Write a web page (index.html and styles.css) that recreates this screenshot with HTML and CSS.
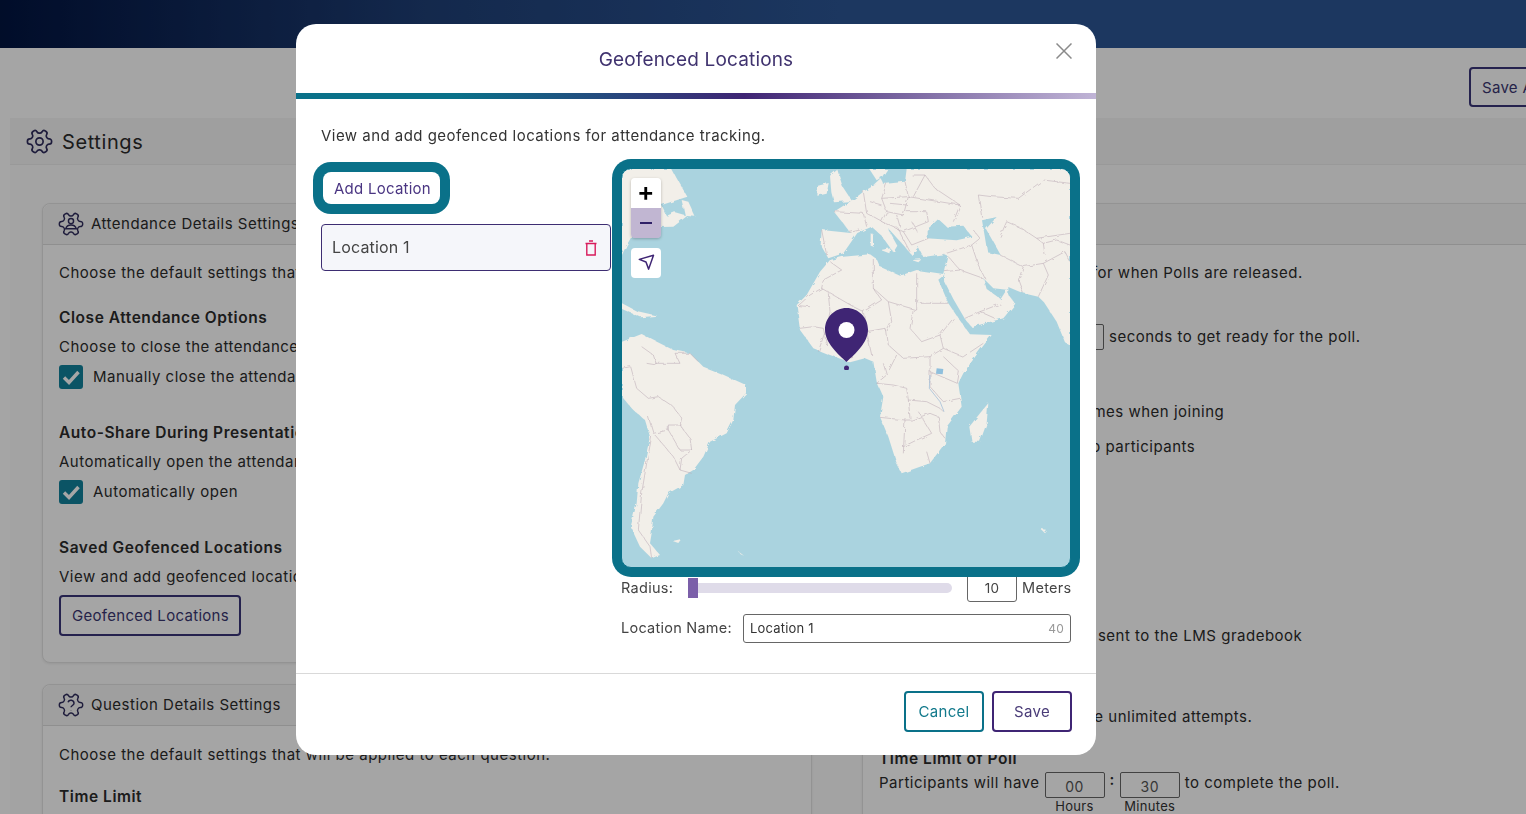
FILE: index.html
```html
<!DOCTYPE html>
<html lang="en">
<head>
    <meta charset="UTF-8">
    <meta name="viewport" content="width=device-width, initial-scale=1.0">
    <title>Geofenced Locations</title>
    <link rel="stylesheet" href="styles.css">
</head>
<body>

    <svg class="icon-defs" aria-hidden="true">
        <symbol id="cog" viewBox="0 0 24 24">
            <path transform="rotate(90 12 12)" d="M12.22 2h-.44a2 2 0 0 0-2 2v.18a2 2 0 0 1-1 1.73l-.43.25a2 2 0 0 1-2 0l-.15-.08a2 2 0 0 0-2.73.73l-.22.38a2 2 0 0 0 .73 2.73l.15.1a2 2 0 0 1 1 1.72v.51a2 2 0 0 1-1 1.74l-.15.09a2 2 0 0 0-.73 2.73l.22.38a2 2 0 0 0 2.73.73l.15-.08a2 2 0 0 1 2 0l.43.25a2 2 0 0 1 1 1.73V20a2 2 0 0 0 2 2h.44a2 2 0 0 0 2-2v-.18a2 2 0 0 1 1-1.73l.43-.25a2 2 0 0 1 2 0l.15.08a2 2 0 0 0 2.73-.73l.22-.39a2 2 0 0 0-.73-2.73l-.15-.08a2 2 0 0 1-1-1.74v-.5a2 2 0 0 1 1-1.74l.15-.09a2 2 0 0 0 .73-2.73l-.22-.38a2 2 0 0 0-2.73-.73l-.15.08a2 2 0 0 1-2 0l-.43-.25a2 2 0 0 1-1-1.73V4a2 2 0 0 0-2-2z"/>
        </symbol>
    </svg>

    <div class="page">
        <div class="topbar"></div>

        <div class="toolbar">
            <button class="btn-outline">Save All Settings</button>
        </div>

        <div class="settings">
            <div class="settings-head">
                <svg class="icon-settings" viewBox="0 0 24 24"><use href="#cog"/><circle cx="12" cy="12" r="3"/></svg>
                <h1>Settings</h1>
            </div>

            <div class="settings-body">
                <!-- left column -->
                <div class="col">
                    <div class="card">
                        <div class="card-head">
                            <svg class="icon-card" viewBox="0 0 24 24"><use href="#cog"/><circle cx="12" cy="9.5" r="2.2"/><path d="M7.5 16c.6-2.2 2.3-3.2 4.5-3.2s3.9 1 4.5 3.2z"/></svg>
                            <span>Attendance Details Settings</span>
                        </div>
                        <div class="card-body">
                            <p class="intro">Choose the default settings that will be applied to each attendance.</p>

                            <div class="option">
                                <h3>Close Attendance Options</h3>
                                <p>Choose to close the attendance manually or automatically.</p>
                                <label class="check"><span class="box"><svg viewBox="0 0 24 24"><path d="M5 12.5l5 5L19.5 7"/></svg></span>Manually close the attendance</label>
                            </div>

                            <div class="option">
                                <h3>Auto-Share During Presentation</h3>
                                <p>Automatically open the attendance during a presentation.</p>
                                <label class="check"><span class="box"><svg viewBox="0 0 24 24"><path d="M5 12.5l5 5L19.5 7"/></svg></span>Automatically open</label>
                            </div>

                            <div class="option option-last">
                                <h3>Saved Geofenced Locations</h3>
                                <p>View and add geofenced locations for attendance tracking.</p>
                                <button class="btn-outline">Geofenced Locations</button>
                            </div>
                        </div>
                    </div>

                    <div class="card">
                        <div class="card-head">
                            <svg class="icon-card" viewBox="0 0 24 24"><use href="#cog"/><path d="M9.4 9.6a2.7 2.7 0 0 1 5.2.9c0 1.800-2.600 2-2.600 3.500M12 16.600v.2"/></svg>
                            <span>Question Details Settings</span>
                        </div>
                        <div class="card-body">
                            <p class="intro">Choose the default settings that will be applied to each question.</p>
                            <div class="option option-time">
                                <h3>Time Limit</h3>
                            </div>
                        </div>
                    </div>
                </div>

                <!-- right column, mostly behind the modal -->
                <div class="col">
                    <div class="card card-right">
                        <div class="card-head"><span>Poll Details Settings</span></div>
                        <div class="card-body">
                            <p class="intro">Choose the default settings for when Polls are released.</p>

                            <div class="line line-countdown">
                                <span>Give participants</span>
                                <span class="num num-small"></span>
                                <span>seconds to get ready for the poll.</span>
                            </div>

                            <p class="line line-names">Ask participants for their names when joining</p>
                            <p class="line line-show">Share the correct answers to participants</p>
                            <p class="line line-lms">Allow the poll's results to be sent to the LMS gradebook</p>
                            <p class="line line-attempts">Let all of the participants have unlimited attempts.</p>

                            <h3 class="poll-limit">Time Limit of Poll</h3>
                            <div class="line-time">
                                <span>Participants will have</span>
                                <div class="time-field"><span class="num">00</span><small>Hours</small></div>
                                <span class="time-colon">:</span>
                                <div class="time-field"><span class="num">30</span><small>Minutes</small></div>
                                <span>to complete the poll.</span>
                            </div>
                        </div>
                    </div>
                </div>
            </div>
        </div>
    </div>

    <div class="overlay">
        <div class="modal">
            <div class="modal-head">
                <h2>Geofenced Locations</h2>
                <button class="modal-close" aria-label="Close">
                    <svg viewBox="0 0 16 16"><path d="M.5.5l15 15M15.500.5l-15 15"/></svg>
                </button>
            </div>
            <div class="modal-bar"></div>

            <div class="modal-body">
                <p class="modal-desc">View and add geofenced locations for attendance tracking.</p>

                <div class="geo">
                    <div class="geo-list">
                        <button class="btn-add">Add Location</button>
                        <div class="geo-item">
                            <span>Location 1</span>
                            <svg class="icon-trash" viewBox="0 0 12 16"><path d="M4 1h4M.5 3.500h11M1.800 3.500h8.400V15H1.800z"/></svg>
                        </div>
                    </div>

                    <div class="geo-main">
                        <div class="map">
                            <svg class="map-tiles" viewBox="36 42 1344 1194" preserveAspectRatio="none">
                                <defs>
                                    <filter id="rough" filterUnits="userSpaceOnUse" x="0" y="0" width="1400" height="1250">
                                        <feTurbulence type="fractalNoise" baseFrequency="0.05" numOctaves="3" seed="4"/>
                                        <feDisplacementMap in="SourceGraphic" scale="11"/>
                                    </filter>
                                </defs>
                                <g class="rough">
                                    <g class="land">
                                        <!-- north america -->
                                        <path d="M36,42 L185,42 L200,70 L232,125 L185,140 L155,150 L170,182 L195,172 L232,182 L190,215 L150,216 L120,236 L70,236 L50,270 L36,300 Z"/>
                                        <path d="M215,135 L235,140 L256,185 L225,182 Z"/>
                                        <path d="M36,445 L80,468 L142,482 L92,487 L36,462 Z"/>
                                        <!-- uk, ireland, scandinavia -->
                                        <path d="M660,62 L682,44 L698,95 L726,138 L672,142 L664,112 Z"/>
                                        <path d="M624,92 L656,84 L650,116 L622,122 Z"/>
                                        <path d="M778,42 L800,76 L816,66 L832,42 Z"/>
                                        <path d="M790,90 L812,70 L820,86 Z"/>
                                        <!-- europe and asia -->
                                        <path d="M890,42 L1380,42 L1380,570 L1365,562 L1340,500 L1302,442 L1285,425 L1240,415 L1195,396 L1195,420 L1216,446 L1180,490 L1085,516 L1065,492 L1030,432 L1000,372 L1005,350 L1015,305 L1000,298 L940,306 L925,276 L905,300 L882,272 L830,215 L862,272 L850,292 L815,242 L785,215 L742,234 L700,295 L655,310 L632,270 L635,225 L722,234 L672,170 L735,130 L760,110 L800,86 L830,86 L885,80 Z"/>
                                        <path d="M782,235 L792,240 L792,275 L782,272 Z"/>
                                        <path d="M812,285 L842,280 L838,295 Z"/>
                                        <path d="M905,315 L935,313 L925,322 Z"/>
                                        <!-- africa -->
                                        <path d="M660,315 L700,305 L780,298 L800,312 L810,335 L870,362 L920,345 L1005,358 L985,374 L1015,445 L1045,490 L1080,538 L1145,540 L1110,585 L1060,655 L1045,685 L1055,755 L1010,815 L1005,865 L960,925 L875,955 L860,925 L835,845 L810,785 L820,725 L800,680 L790,620 L765,610 L720,622 L660,600 L610,580 L570,525 L560,450 L590,420 L630,350 Z"/>
                                        <path d="M1135,745 L1130,805 L1110,860 L1085,860 L1078,815 L1110,775 Z"/>
                                        <!-- south america -->
                                        <path d="M36,560 L95,537 L130,555 L190,585 L240,595 L280,635 L330,655 L408,690 L408,715 L375,750 L370,795 L350,835 L300,860 L280,905 L250,945 L225,960 L220,990 L175,1015 L160,1045 L130,1085 L125,1135 L120,1165 L150,1200 L125,1210 L90,1175 L62,1115 L80,1045 L85,985 L105,915 L120,845 L105,795 L70,765 L36,725 Z"/>
                                        <path d="M188,1158 L214,1152 L205,1164 Z"/>
                                        <path d="M386,1190 L402,1202 L392,1198 Z"/>
                                        <path d="M1292,1122 L1308,1124 L1302,1132 Z"/>
                                    </g>
                                    <g class="water">
                                        <path d="M950,225 L985,192 L1010,215 L1060,212 L1086,245 L1040,256 L950,250 Z"/>
                                        <path d="M1116,196 L1160,186 L1128,222 L1172,300 L1132,292 L1124,242 Z"/>
                                        <path d="M1120,370 L1150,400 L1190,404 L1172,432 L1130,402 Z"/>
                                    </g>
                                    <g class="borders">
                                        <!-- africa -->
                                        <path d="M635,400 L730,455 L760,470 L815,435 L790,400 L790,312"/>
                                        <path d="M660,320 L695,345 L640,375 L635,400 L600,420 L565,452 L600,455"/>
                                        <path d="M655,415 L660,470 L650,520 L640,545 L625,590"/>
                                        <path d="M570,520 L610,515 L640,520 L650,570"/>
                                        <path d="M790,400 L835,440 L920,465 L920,355"/>
                                        <path d="M920,445 L1015,445"/>
                                        <path d="M835,440 L845,500 L830,530 L835,570 L880,610 L960,605 L1000,580"/>
                                        <path d="M760,470 L770,530 L825,520 L830,530"/>
                                        <path d="M910,465 L900,520 L935,560 L990,540 L1030,490"/>
                                        <path d="M990,540 L1000,580 L1060,605 L1120,565"/>
                                        <path d="M770,530 L785,600 M720,540 L725,610"/>
                                        <path d="M960,605 L960,695 L1000,740 L1050,730"/>
                                        <path d="M1000,605 L1048,650 L1042,685 L960,650"/>
                                        <path d="M800,685 L850,690 L890,700 L895,735 L950,740 L990,760 L1000,770"/>
                                        <path d="M810,787 L885,795 L880,895 M885,795 L905,795 L960,775 L985,785 L990,830 L1005,850"/>
                                        <path d="M895,735 L900,790 M925,770 L965,835 L920,855 L880,875 M960,925 L950,890"/>
                                        <path d="M820,625 L830,660 L860,600 M830,660 L800,685"/>
                                        <!-- europe -->
                                        <path d="M672,170 L760,175 L770,215 M760,110 L770,175 L815,200"/>
                                        <path d="M635,225 L650,300 M720,232 L750,225"/>
                                        <path d="M830,86 L815,130 L830,170 L880,180 L895,125 L885,80"/>
                                        <path d="M815,130 L895,125 L1050,150 L1030,200"/>
                                        <path d="M830,170 L815,200 L880,230 L955,200 L950,170 L890,170"/>
                                        <path d="M880,230 L905,270 L955,250 M860,215 L900,290"/>
                                        <path d="M905,60 L945,60 L975,100 L1050,150 M945,60 L910,125"/>
                                        <path d="M780,140 L815,150 M840,145 L890,150 M860,180 L870,215 M905,200 L925,235"/>
                                        <!-- asia -->
                                        <path d="M1000,298 L1085,270 L1110,250 L1090,225 M1085,270 L1105,330 L1125,370"/>
                                        <path d="M1015,305 L1050,345 L1120,370 M1050,345 L1005,350"/>
                                        <path d="M1105,120 L1145,125 L1225,130 L1300,75 L1380,85 M1105,120 L1115,185"/>
                                        <path d="M1170,300 L1240,335 L1225,375 L1240,415 M1170,245 L1190,200 L1235,220 L1280,250 L1380,235"/>
                                        <path d="M1240,335 L1300,325 L1365,290 L1380,320 M1300,325 L1315,360 L1285,425"/>
                                        <path d="M1065,490 L1110,470 L1175,445 M1110,470 L1155,490"/>
                                        <path d="M1280,250 L1300,265 L1340,255 L1380,270 M1300,265 L1305,300"/>
                                        <!-- south america -->
                                        <path d="M36,640 L62,635 L80,700 L115,730 L145,725 L190,755 L215,790 L210,810 L240,850 L245,885 L215,910 L210,945 L245,955"/>
                                        <path d="M110,625 L140,630 L130,600 L95,575 M135,625 L210,625 L195,595 L240,595 L265,620"/>
                                        <path d="M115,785 L130,835 L175,825 L175,810 L215,810"/>
                                        <path d="M125,845 L110,925 L95,1015 L85,1125 L120,1175 L125,1210"/>
                                        <path d="M175,825 L210,885 L245,885 M135,840 L190,905 L210,945"/>
                                    </g>
                                </g>
                                <path class="river" d="M960,660 L958,700 L990,740 L1002,770"/>
                                <path class="lake" d="M980,640 L1000,642 L998,658 L978,656 Z"/>
                            </svg>

                            <div class="map-controls">
                                <div class="zoom-group">
                                    <button class="map-btn">+</button>
                                    <button class="map-btn map-btn-active"><span class="minus"></span></button>
                                </div>
                                <button class="map-btn">
                                    <svg class="icon-nav" viewBox="0 0 24 24"><polygon points="3,8.500 22,3 15.500,21.500 12,12"/></svg>
                                </button>
                            </div>

                            <svg class="pin" viewBox="0 0 43 62">
                                <path d="M21.500 0C9.600 0 0 9.600 0 21.500 0 35 13 46 21.500 54 30 46 43 35 43 21.500 43 9.600 33.400 0 21.500 0z"/>
                                <circle class="pin-hole" cx="21.500" cy="22" r="8"/>
                                <circle cx="21.500" cy="60" r="2.500"/>
                            </svg>
                        </div>

                        <div class="radius-row">
                            <span class="radius-label">Radius:</span>
                            <div class="slider"><span class="slider-thumb"></span></div>
                            <span class="radius-value">10</span>
                            <span class="radius-unit">Meters</span>
                        </div>

                        <div class="name-row">
                            <span class="name-label">Location Name:</span>
                            <div class="name-field">
                                <span>Location 1</span>
                                <span class="name-count">40</span>
                            </div>
                        </div>
                    </div>
                </div>
            </div>

            <div class="modal-foot">
                <button class="btn-cancel">Cancel</button>
                <button class="btn-save">Save</button>
            </div>
        </div>
    </div>

</body>
</html>
```

FILE: styles.css
```css
* {
    box-sizing: border-box;
}

html, body {
    height: 100%;
    overflow: hidden;
}

body {
    font-family: 'Inter', 'Liberation Sans', sans-serif;
    font-size: 15px;
    letter-spacing: 0.5px;
    margin: 0;
    color: #2b2b2b;
    background-color: #fdfdfd;
}

h1, h2, h3, p {
    margin: 0;
    font-weight: normal;
}

button {
    font-family: inherit;
    letter-spacing: inherit;
    cursor: pointer;
}

.icon-defs {
    width: 0;
    height: 0;
    position: absolute;
}

/* page behind the modal */

.page {
    width: 1526px;
    height: 814px;
    overflow: hidden;
}

.topbar {
    height: 48px;
    background: linear-gradient(90deg, #021440 0%, #1f3f76 28%, #2b5594 55%, #2b5594 100%);
}

.toolbar {
    height: 70px;
    padding: 19px 0 0 1469px;
}

.toolbar .btn-outline {
    white-space: nowrap;
    height: 40px;
    width: 160px;
    padding: 0 0 0 11px;
    text-align: left;
}

.btn-outline {
    height: 41px;
    padding: 0 10px 0 11px;
    font-size: 15px;
    letter-spacing: 0.3px;
    color: #3a3671;
    background-color: transparent;
    border: 2px solid #3a3578;
    border-radius: 4px;
}

.settings {
    margin-left: 10px;
    width: 1600px;
}

.settings-head {
    height: 47px;
    display: flex;
    align-items: center;
    gap: 8px;
    padding: 1px 0 0 15px;
    background-color: #f4f4f4;
    border-bottom: 1px solid #ececec;
}

.settings-head h1 {
    font-size: 20px;
    letter-spacing: 0.6px;
}

.icon-settings {
    width: 29px;
    height: 29px;
    fill: none;
    stroke: #2f2c5c;
    stroke-width: 1.4;
}

.settings-body {
    display: flex;
    gap: 50px;
    padding: 38px 0 0 32px;
    background-color: #fbfbfb;
}

.col {
    width: 770px;
    flex: none;
}

.card {
    border: 1px solid #e2e2e2;
    border-radius: 8px;
    background-color: #fefefe;
    margin-bottom: 21px;
    box-shadow: 0 1px 3px rgba(0, 0, 0, 0.08);
}

.card-head {
    height: 41px;
    display: flex;
    align-items: center;
    gap: 6px;
    padding: 0 0 1px 14px;
    background-color: #f5f5f5;
    border-bottom: 1px solid #dcdcdc;
    border-radius: 8px 8px 0 0;
    white-space: nowrap;
}

.icon-card {
    width: 28px;
    height: 28px;
    fill: none;
    stroke: #2f2c5c;
    stroke-width: 1.25;
}

.card-body {
    padding: 18px 16px 26px;
}

.card + .card .card-body {
    padding-top: 19px;
}

.card-body p, .card-body h3, .check {
    white-space: nowrap;
    line-height: 20px;
}

.option {
    margin-top: 25px;
    height: 82px;
    margin-bottom: 33px;
}

.option h3 {
    font-size: 15.5px;
    font-weight: 600;
    letter-spacing: 0.55px;
    margin-bottom: 9px;
}

.option p {
    margin-bottom: 8px;
}

.option + .option {
    margin-top: 0;
}

.option-last {
    height: 98px;
    margin-bottom: 0;
}

.option-time {
    margin-top: 22px;
}

.check {
    display: flex;
    align-items: center;
    gap: 10px;
    height: 24px;
}

.box {
    width: 24px;
    height: 24px;
    border-radius: 3px;
    background-color: #11829c;
}

.box svg {
    display: block;
    fill: none;
    stroke: #fff;
    stroke-width: 3.4;
}

/* right column rows: the start of each line sits behind the modal */

.line {
    white-space: nowrap;
    line-height: 20px;
}

.line-countdown {
    margin-top: 41px;
    display: flex;
    align-items: center;
    gap: 5px;
}

.line-countdown span:first-child {
    width: 140px;
}

.num {
    display: block;
    height: 26px;
    line-height: 27px;
    text-align: center;
    width: 60px;
    border: 1px solid #666;
    border-radius: 2px;
    color: #555;
    font-size: 14px;
}

.num-small {
    width: 80px;
}

.card-body .line-names {
    margin-top: 52px;
    padding-left: 3px;
}

.card-body .line-show {
    margin-top: 15px;
    padding-left: 3px;
}

.line-lms {
    margin-top: 169px;
}

.card-body .line-attempts {
    margin-top: 61px;
    margin-left: -5px;
}

.poll-limit {
    font-size: 15.5px;
    font-weight: 600;
    letter-spacing: 0.55px;
    margin-top: 22px;
}

.line-time {
    display: flex;
    gap: 5px;
    white-space: nowrap;
    line-height: 20px;
    margin-top: 4px;
}

.time-field {
    display: flex;
    flex-direction: column;
    align-items: center;
    margin-top: -1px;
}

.time-field small {
    font-size: 13px;
    letter-spacing: 0.3px;
    line-height: 16px;
    color: #333;
}

.time-colon {
    line-height: 14px;
    font-weight: 600;
}

/* modal */

.overlay {
    position: fixed;
    top: 0;
    left: 0;
    right: 0;
    bottom: 0;
    padding: 24px 0 0 296px;
    background-color: rgba(0, 0, 0, 0.35);
}

.modal {
    width: 800px;
    height: 731px;
    background-color: #fff;
    border-radius: 20px;
    overflow: hidden;
    display: flex;
    flex-direction: column;
}

.modal-head {
    height: 69px;
    flex: none;
    display: flex;
    align-items: center;
    justify-content: center;
    position: relative;
}

.modal-head h2 {
    font-size: 19px;
    letter-spacing: 0.15px;
    color: #40336f;
    margin-top: 1px;
}

.modal-close {
    position: absolute;
    top: 19px;
    right: 24px;
    width: 16px;
    height: 16px;
    padding: 0;
    border: none;
    background: none;
}

.modal-close svg {
    display: block;
    fill: none;
    stroke: #8a8a8a;
    stroke-width: 1.5;
}

.modal-bar {
    height: 6px;
    flex: none;
    background: linear-gradient(90deg, #0a7189 0%, #0a7189 20%, #3f2574 56%, #c0b4d6 100%);
}

.modal-body {
    flex: 1;
    padding: 27px 25px 0;
    border-bottom: 1px solid #d9d9d9;
}

.modal-desc {
    line-height: 20px;
    letter-spacing: 0.46px;
    color: #333;
    margin-bottom: 22px;
}

.geo {
    display: flex;
    gap: 10px;
}

.geo-list {
    width: 290px;
    flex: none;
    padding-top: 4px;
}

.btn-add {
    display: block;
    width: 117px;
    height: 32px;
    margin: 0 0 20px 2px;
    padding: 0 0 0 2px;
    font-size: 15px;
    letter-spacing: 0.25px;
    color: #4a3582;
    background-color: #fff;
    border: none;
    border-radius: 8px;
    box-shadow: 0 0 0 10px #0a7189;
}

.geo-item {
    height: 47px;
    display: flex;
    align-items: center;
    justify-content: space-between;
    padding: 0 13px 2px 10px;
    font-size: 16px;
    letter-spacing: 0.15px;
    color: #444;
    background-color: #f5f6fa;
    border: 1px solid #3d2d72;
    border-radius: 4px;
}

.icon-trash {
    width: 12px;
    height: 16px;
    margin-top: 2px;
    fill: none;
    stroke: #d81b5b;
    stroke-width: 1.4;
}

.geo-main {
    width: 450px;
    flex: none;
}

.map {
    height: 400px;
    position: relative;
    z-index: 1;
    background-color: #aad3df;
    border: 1px solid #0a7189;
    border-radius: 10px;
    box-shadow: 0 0 0 9px #0a7189;
}

.map-tiles {
    position: absolute;
    top: 0;
    left: 0;
    width: 100%;
    height: 100%;
    border-radius: 9px;
}

.rough {
    filter: url(#rough);
}

.land path {
    fill: #f2efe9;
}

.water path {
    fill: #aad3df;
}

.borders path {
    fill: none;
    stroke: #b9a9b4;
    stroke-width: 1.6;
}

.river {
    fill: none;
    stroke: #7da6d0;
    stroke-width: 1.6;
}

.lake {
    fill: #8fbfdc;
}

.map-controls {
    position: absolute;
    top: 9px;
    left: 9px;
    display: flex;
    flex-direction: column;
    gap: 10px;
}

.zoom-group {
    border-radius: 4px;
    box-shadow: 0 1px 3px rgba(0, 0, 0, 0.25);
    overflow: hidden;
}

.map-btn {
    display: flex;
    align-items: center;
    justify-content: center;
    width: 30px;
    height: 30px;
    padding: 0 0 3px;
    font-size: 26px;
    font-weight: 600;
    line-height: 1;
    color: #000;
    background-color: #fff;
    border: none;
    border-radius: 4px;
}

.zoom-group .map-btn {
    border-radius: 0;
}

.map-btn-active {
    background-color: #c1b6d2;
    padding: 0 0 1px;
}

.minus {
    display: block;
    width: 12px;
    height: 2px;
    background-color: #2f2067;
}

.icon-nav {
    width: 18px;
    height: 18px;
    fill: none;
    stroke: #3f2574;
    stroke-width: 2;
    stroke-linejoin: round;
}

.pin {
    position: absolute;
    left: 203px;
    top: 139px;
    width: 43px;
    height: 62px;
    fill: #3f2574;
}

.pin .pin-hole {
    fill: #fff;
}

.radius-row {
    display: flex;
    align-items: center;
    margin-top: 6px;
    height: 28px;
    font-size: 14.5px;
    letter-spacing: 0.3px;
    color: #444;
}

.radius-label {
    width: 67px;
    flex: none;
    padding-bottom: 2px;
}

.radius-unit {
    padding-bottom: 2px;
}

.slider {
    width: 264px;
    height: 10px;
    flex: none;
    background-color: #dfdbe9;
    border-radius: 5px;
    display: flex;
    align-items: center;
}

.slider-thumb {
    display: block;
    width: 10px;
    height: 20px;
    background-color: #7b5fa9;
}

.radius-value {
    width: 50px;
    height: 28px;
    flex: none;
    margin: 0 5px 0 15px;
    line-height: 27px;
    text-align: center;
    font-size: 13.5px;
    border: 1px solid #666;
    border-radius: 3px;
}

.name-row {
    display: flex;
    align-items: center;
    margin-top: 12px;
    font-size: 14.5px;
    letter-spacing: 0.3px;
    color: #444;
}

.name-label {
    width: 122px;
    flex: none;
    padding-bottom: 2px;
    letter-spacing: 0.25px;
}

.name-field {
    flex: 1;
    height: 29px;
    display: flex;
    align-items: center;
    justify-content: space-between;
    padding: 0 6px 1px;
    font-size: 13px;
    letter-spacing: 0.2px;
    color: #333;
    border: 1px solid #666;
    border-radius: 3px;
}

.name-count {
    font-size: 12px;
    color: #999;
}

.modal-foot {
    height: 81px;
    flex: none;
    display: flex;
    justify-content: flex-end;
    gap: 8px;
    padding: 17px 24px 0 0;
}

.btn-cancel, .btn-save {
    width: 80px;
    height: 41px;
    padding: 0;
    font-size: 15px;
    letter-spacing: 0.3px;
    background-color: #fff;
    border-radius: 4px;
    border: 2px solid;
}

.btn-cancel {
    color: #137a8c;
    border-color: #0a7189;
}

.btn-save {
    color: #4a3c78;
    border-color: #3f2574;
}
```
